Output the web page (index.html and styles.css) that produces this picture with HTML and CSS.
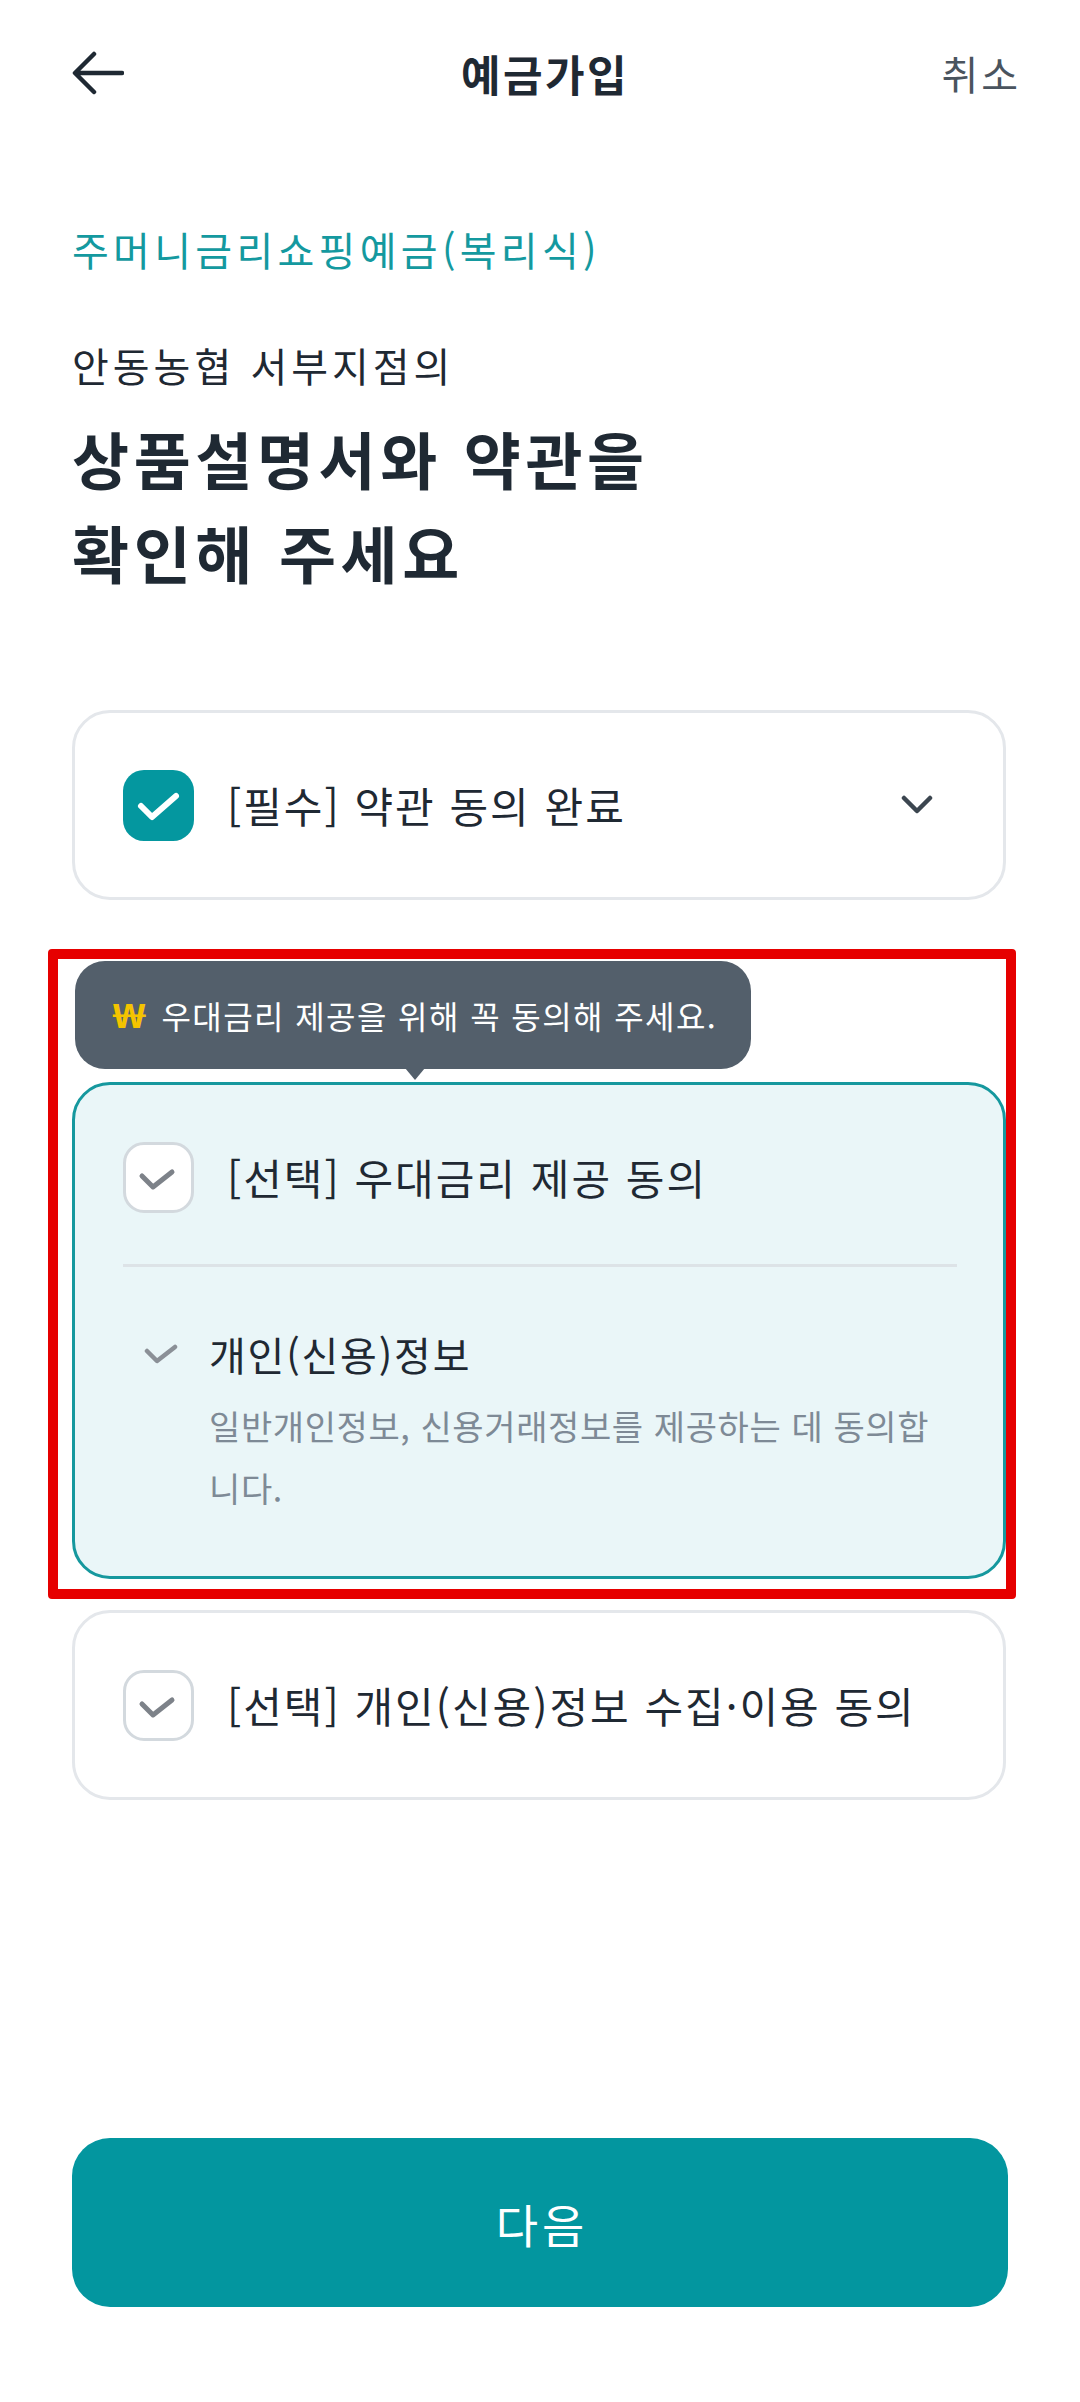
FILE: index.html
```html
<!DOCTYPE html>
<html lang="ko">
<head>
<meta charset="utf-8">
<title>예금가입</title>
<link rel="stylesheet" href="styles.css">
</head>
<body>
<div class="page">
  <header class="topbar">
    <button class="back" aria-label="뒤로">
      <svg width="52" height="44" viewBox="0 0 52 44"><path d="M50 22H4M22 3L3 22l19 19" fill="none" stroke="#1f2933" stroke-width="4.5" stroke-linecap="round" stroke-linejoin="round"/></svg>
    </button>
    <h1 class="title">예금가입</h1>
    <span class="cancel">취소</span>
  </header>

  <p class="product">주머니금리쇼핑예금(복리식)</p>
  <p class="branch">안동농협 서부지점의</p>
  <h2 class="heading">상품설명서와 약관을<br>확인해 주세요</h2>

  <div class="card">
    <div class="row">
      <span class="box checked">
        <svg width="71" height="71" viewBox="0 0 71 71"><path d="M18 36l11 11 24-21" fill="none" stroke="#fff" stroke-width="6" stroke-linecap="round" stroke-linejoin="round"/></svg>
      </span>
      <span class="label">[필수] 약관 동의 완료</span>
      <svg class="chev" width="32" height="20" viewBox="0 0 32 20"><path d="M3 3l13 13L29 3" fill="none" stroke="#3c4650" stroke-width="4.5" stroke-linecap="round" stroke-linejoin="round"/></svg>
    </div>
  </div>

  <div class="focus">
    <div class="tip"><span class="won">₩</span>우대금리 제공을 위해 꼭 동의해 주세요.</div>
    <div class="card active">
      <div class="row">
        <span class="box">
          <svg width="65" height="65" viewBox="0 0 65 65"><path d="M16 31l11 11 19-15" fill="none" stroke="#7d8289" stroke-width="5" stroke-linecap="round" stroke-linejoin="round"/></svg>
        </span>
        <span class="label">[선택] 우대금리 제공 동의</span>
      </div>
      <div class="divider"></div>
      <div class="sub">
        <svg class="subcheck" width="34" height="22" viewBox="0 0 34 22"><path d="M3 7l10 10L31 3" fill="none" stroke="#8b9097" stroke-width="4.5" stroke-linecap="round" stroke-linejoin="round"/></svg>
        <div class="subtext">
          <p class="subtitle">개인(신용)정보</p>
          <p class="desc">일반개인정보, 신용거래정보를 제공하는 데 동의합니다.</p>
        </div>
      </div>
    </div>
  </div>

  <div class="card last">
    <div class="row">
      <span class="box">
        <svg width="65" height="65" viewBox="0 0 65 65"><path d="M16 31l11 11 19-15" fill="none" stroke="#7d8289" stroke-width="5" stroke-linecap="round" stroke-linejoin="round"/></svg>
      </span>
      <span class="label">[선택] 개인(신용)정보 수집·이용 동의</span>
    </div>
  </div>

  <button class="next">다음</button>
</div>
</body>
</html>
```

FILE: styles.css
```css
* { box-sizing: border-box; }
html, body {
  margin: 0;
  padding: 0;
  background: #ffffff;
}
body {
  font-family: "Noto Sans CJK KR", "Noto Sans", sans-serif;
  color: #1f2933;
  width: 1080px;
}
p, h1, h2 { margin: 0; }

.page {
  padding: 0 74px 0 72px;
}

.topbar {
  height: 146px;
  display: grid;
  grid-template-columns: 1fr auto 1fr;
  align-items: center;
  margin-right: -12px;
}
.back {
  border: 0;
  background: none;
  padding: 0;
  width: 52px;
  height: 44px;
  display: flex;
  justify-self: start;
}
.title {
  font-size: 43px;
  font-weight: 700;
  line-height: 56px;
  letter-spacing: 2.5px;
  margin-left: 0;
}
.cancel {
  justify-self: end;
  font-size: 40px;
  line-height: 56px;
  color: #4a545e;
  letter-spacing: 3px;
  margin-right: -3px;
}

.product {
  margin-top: 75px;
  font-size: 40px;
  line-height: 56px;
  color: #14999f;
  letter-spacing: 4.3px;
}
.branch {
  margin-top: 60px;
  font-size: 40px;
  line-height: 56px;
  letter-spacing: 4px;
}
.heading {
  margin-top: 18px;
  font-size: 62px;
  font-weight: 700;
  line-height: 94px;
  letter-spacing: 4.6px;
}

.card {
  border: 3px solid #e4e7eb;
  border-radius: 38px;
  padding: 56px 48px;
  background: #fff;
}
.heading + .card { margin-top: 111px; }
.card.last { margin-top: 31px; }

.row {
  display: flex;
  align-items: center;
  height: 72px;
}
.box {
  width: 71px;
  height: 71px;
  flex: none;
  border: 3px solid #d3d9de;
  border-radius: 21px;
  background: #fff;
  display: flex;
  align-items: center;
  justify-content: center;
}
.box.checked {
  border: 0;
  background: #04979f;
}
.label {
  margin-left: 33px;
  font-size: 42px;
  line-height: 56px;
  letter-spacing: 2px;
  flex: 1;
}
.chev { flex: none; margin-right: 22px; }

.focus {
  position: relative;
  margin-top: 61px;
}
.focus::before {
  content: "";
  position: absolute;
  top: -12px;
  left: -24px;
  right: -10px;
  bottom: -20px;
  border: 10px solid #e60000;
  border-radius: 4px;
  pointer-events: none;
}
.tip {
  position: relative;
  display: inline-flex;
  align-items: center;
  margin-left: 3px;
  height: 108px;
  padding: 0 34px 0 38px;
  background: #535f6b;
  border-radius: 30px;
  color: #ffffff;
  font-size: 32px;
  letter-spacing: 1.4px;
}
.tip::after {
  content: "";
  position: absolute;
  left: 330px;
  bottom: -11px;
  border-left: 10px solid transparent;
  border-right: 10px solid transparent;
  border-top: 12px solid #535f6b;
}
.won {
  display: inline-block;
  font-family: "Noto Sans", "DejaVu Sans", sans-serif;
  color: #f4c400;
  font-weight: 700;
  font-size: 34px;
  transform: scaleX(1.35);
  margin-left: 4px;
  margin-right: 18px;
}
.card.active {
  margin-top: 13px;
  border-color: #16989e;
  background: #eaf6f8;
  padding-bottom: 57px;
}
.divider {
  margin-top: 51px;
  height: 3px;
  background: #dde3e7;
  margin-right: -2px;
}
.sub {
  margin-top: 59px;
  display: flex;
  align-items: flex-start;
}
.subcheck {
  flex: none;
  margin-left: 21px;
  margin-top: 18px;
}
.subtext {
  margin-left: 31px;
  flex: 1;
}
.subtitle {
  font-size: 40px;
  line-height: 56px;
  letter-spacing: 1.8px;
}
.desc {
  margin-top: 13px;
  max-width: 732px;
  font-size: 34px;
  line-height: 62px;
  color: #7e8a96;
  letter-spacing: 0.6px;
  word-break: break-all;
}

.next {
  display: block;
  width: 936px;
  height: 169px;
  margin-top: 338px;
  border: 0;
  border-radius: 38px;
  background: #03969f;
  color: #ffffff;
  font-family: "Noto Sans CJK KR", "Noto Sans", sans-serif;
  font-size: 46px;
  letter-spacing: 4px;
  text-indent: 4px;
}
```
